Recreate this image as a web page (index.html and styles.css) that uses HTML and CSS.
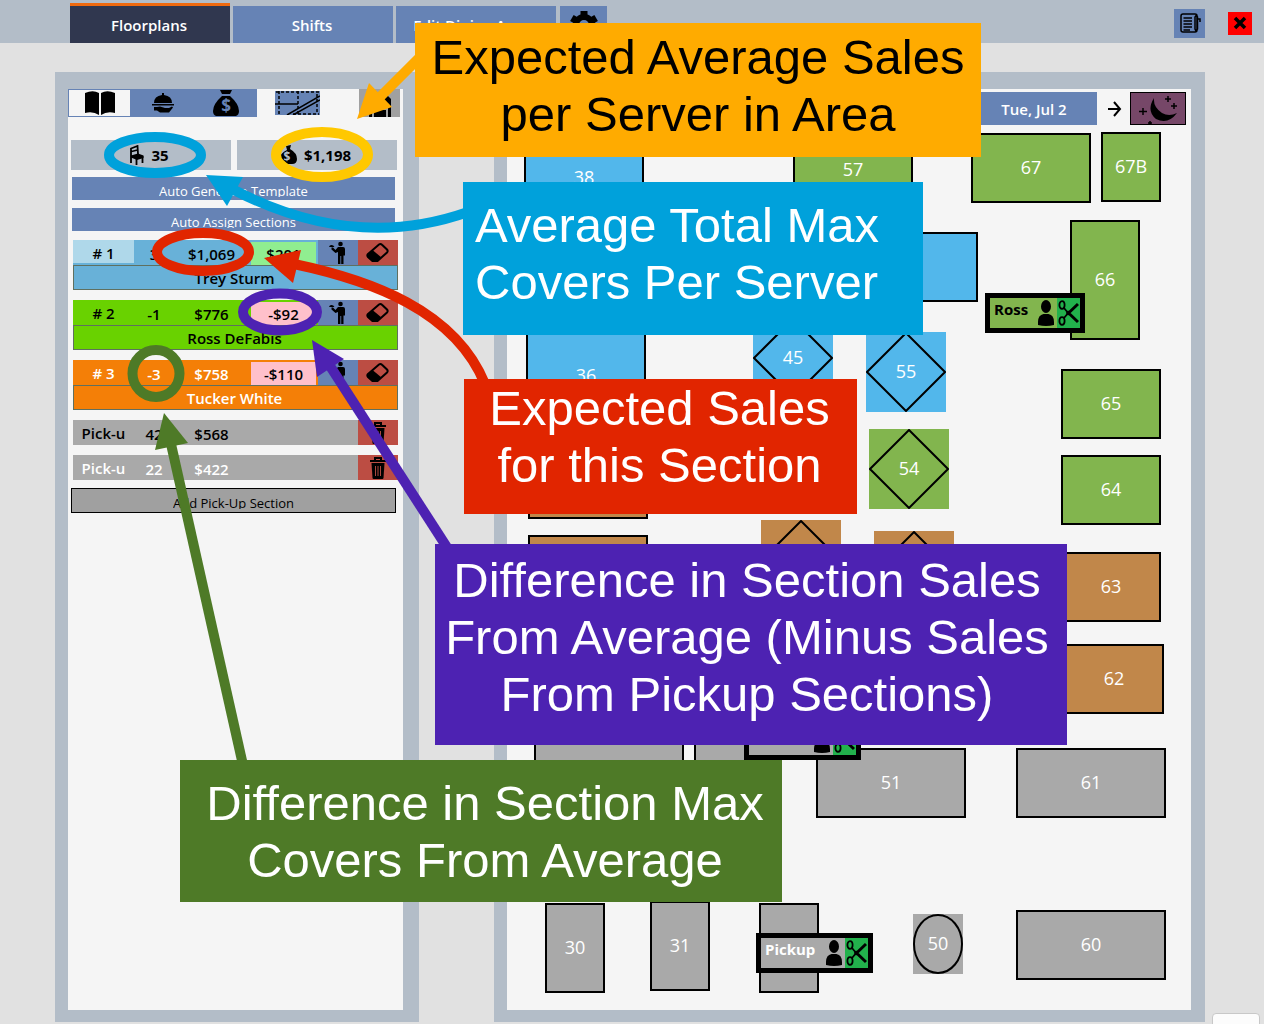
FILE: index.html
```html
<!DOCTYPE html>
<html lang="en">
<head>
<meta charset="utf-8">
<title>Floorplans</title>
<link rel="stylesheet" href="styles.css">
</head>
<body>
<svg class="defs" aria-hidden="true">
  <symbol id="waiter" viewBox="0 0 18 24"><circle cx="11.500" cy="3" r="2.300"/><path d="M9 6h5q2 0 2 2v6.500h-1.500V23h-2.300v-8h-.800v8H9V11L6.500 12 2.500 8.500V6.500h1.500L6.500 9zM0 6q.5-2 2.500-2t3 2z"/></symbol>
  <symbol id="eraser" viewBox="0 0 24 22"><path d="M2 12L13 2.500q1.500-1.200 3 .3l5 4.700q1.300 1.500 0 3L11.500 19H6.500L2 15q-1.300-1.500 0-3z" fill="none" stroke="#000" stroke-width="2"/><path d="M2 12.500L6.500 8 15.500 15.500 11.500 20H6.500L2 15.500z"/></symbol>
  <symbol id="trash" viewBox="0 0 18 22"><path d="M6 3V1h6v2M1 4h16" fill="none" stroke="#000" stroke-width="2"/><path d="M2.500 6h13L14.500 21q-.2 1-1 1h-9q-.8 0-1-1z"/><path d="M6.500 9v10M9 9v10M11.500 9v10" stroke="#a9483f"/></symbol>
  <symbol id="person" viewBox="0 0 16 26"><ellipse cx="8" cy="6.500" rx="5" ry="6.500"/><path d="M0 25v-3q0-7 5.500-8h5q5.500 1 5.500 8v3q-8 2-16 0z"/></symbol>
  <symbol id="scissors" viewBox="0 0 21 26"><g fill="none" stroke="#000" stroke-width="1.800"><ellipse cx="4" cy="5" rx="2.600" ry="3.800"/><ellipse cx="4" cy="21" rx="2.600" ry="3.800"/><path d="M6 8l5 6M6 18l5-6"/><path d="M9 14.500L20 4M9 11.500L20 22" stroke-width="3"/></g></symbol>
</svg>
<div class="page">
  <header class="topbar">
    <nav class="tabs">
      <button class="tab active">Floorplans</button>
      <button class="tab">Shifts</button>
      <button class="tab">Edit Dining Areas</button>
      <button class="tab gear" aria-label="Settings"><svg width="30" height="30" viewBox="0 0 30 30"><path d="M11.500 1h7v5h-7zM11.500 24h7v5h-7z"/><path d="M11.500 1h7v5h-7z" transform="rotate(60 15 15)"/><path d="M11.500 1h7v5h-7z" transform="rotate(120 15 15)"/><path d="M11.500 1h7v5h-7z" transform="rotate(240 15 15)"/><path d="M11.500 1h7v5h-7z" transform="rotate(300 15 15)"/><circle cx="15" cy="15" r="8" fill="none" stroke="#000" stroke-width="6"/></svg></button>
    </nav>
    <div class="window-buttons">
      <button class="notes" aria-label="Notes"><svg width="22" height="22" viewBox="0 0 22 22" fill="none" stroke="#000" stroke-width="1.500"><path d="M16 2H4Q2 2 2 4v14q0 2 2 2h12q2 0 2-2V4q0-2-2-2M16 5v12l1 2 1.500-2V5l-1-2zM19 7h2v3M4.500 6H13M4.500 9H13M4.500 12H13M4.500 15H13M4.500 18H11"/></svg></button>
      <button class="close" aria-label="Close"><svg width="14" height="14" viewBox="0 0 14 14"><path d="M2 2l10 10M12 2L2 12" stroke="#000" stroke-width="3.500"/></svg></button>
    </div>
  </header>
  <main class="workspace">
    <aside class="sidebar">
      <div class="modes">
        <button class="mode current" aria-label="Book"><svg width="32" height="26" viewBox="0 0 32 26"><path d="M1 3Q9-.500 15 3V25Q9 21 1 23zM31 3Q23-.500 17 3V25Q23 21 31 23z"/></svg></button>
        <button class="mode" aria-label="Service"><svg width="24" height="22" viewBox="0 0 24 22"><path d="M3 11q0-7 8-8V1h2v2q8 1 8 8zM1 12h22v1.500H1zM3 15h3l3-.5 5 1.500h4l3-1.500 1 1-4 5H9l-3-2H3z"/></svg></button>
        <button class="mode" aria-label="Sales"><svg width="30" height="26" viewBox="0 0 30 26"><path d="M9 0h12l-2 4h-8zM11 6h8q9 8 9 15 0 4-3 5H5q-3-1-3-5 0-7 9-15z"/><text x="15" y="22" class="coin">$</text></svg></button>
        <button class="grid" aria-label="Grid lines"><svg width="45" height="24" viewBox="0 0 45 24" fill="none" stroke="#000" stroke-width="1.500"><path d="M1 1h43M4 0v24M23 0v24M42 3v20M18 23h26" stroke-dasharray="3 2"/><path d="M0 13h23M12 24L45 5M18 24L45 9"/></svg></button>
        <button class="save" aria-label="Save"><svg width="22" height="22" viewBox="0 0 22 22"><path d="M0 22V4l4-4h14l4 4v18h-3v-9H3v9zM5 15h12v7H5z"/></svg></button>
      </div>
      <div class="stats">
        <div class="stat"><svg width="14" height="20" viewBox="0 0 14 20"><path d="M1 18V3.500L7.500 1l.5 8M1.500 6.500L7.500 5M6.500 13v7M12.500 11v7" fill="none" stroke="#000" stroke-width="1.800"/><path d="M1 10.500l7-2 5.500 2V13L7 15l-6-2.500z"/></svg>35</div>
        <div class="stat"><svg width="17" height="20" viewBox="0 0 17 20"><path d="M6 1l5-1-1 4Q17 8 17 14q0 5-5 5H5q-5 0-5-5.500T7 5z"/><text x="7" y="16" class="coin small">$</text></svg>$1,198</div>
      </div>
      <button class="action"><span>Auto Generate Template</span></button>
      <button class="action"><span>Auto Assign Sections</span></button>
      <div class="sections">
        <section class="card sky">
          <div class="cells"><span class="num"># 1</span><span>3</span><span>$1,069</span><span class="diff up">$201</span><button class="assign" aria-label="Assign server"><svg width="18" height="24"><use href="#waiter"/></svg></button><button class="erase" aria-label="Clear"><svg width="24" height="22"><use href="#eraser"/></svg></button></div>
          <div class="name">Trey Sturm</div>
        </section>
        <section class="card lime">
          <div class="cells"><span class="num"># 2</span><span>-1</span><span>$776</span><span class="diff">-$92</span><button class="assign" aria-label="Assign server"><svg width="18" height="24"><use href="#waiter"/></svg></button><button class="erase" aria-label="Clear"><svg width="24" height="22"><use href="#eraser"/></svg></button></div>
          <div class="name">Ross DeFabis</div>
        </section>
        <section class="card tangerine">
          <div class="cells"><span class="num"># 3</span><span>-3</span><span>$758</span><span class="diff">-$110</span><button class="assign" aria-label="Assign server"><svg width="18" height="24"><use href="#waiter"/></svg></button><button class="erase" aria-label="Clear"><svg width="24" height="22"><use href="#eraser"/></svg></button></div>
          <div class="name">Tucker White</div>
        </section>
        <section class="card pickup dark">
          <div class="cells"><span class="num">Pick-u</span><span>42</span><span>$568</span><button class="erase" aria-label="Delete"><svg width="18" height="22"><use href="#trash"/></svg></button></div>
        </section>
        <section class="card pickup">
          <div class="cells"><span class="num">Pick-u</span><span>22</span><span>$422</span><button class="erase" aria-label="Delete"><svg width="18" height="22"><use href="#trash"/></svg></button></div>
        </section>
      </div>
      <button class="action add"><span>Add Pick-Up Section</span></button>
    </aside>
    <div class="floor">
      <div class="daybar">
        <button class="date">Tue, Jul 2</button>
        <button class="next" aria-label="Next day"><svg width="15" height="16" viewBox="0 0 15 16" fill="none" stroke="#000" stroke-width="2"><path d="M1 8h12M7 1l6 7-6 7"/></svg></button>
        <button class="night" aria-label="Dinner shift"><svg width="50" height="30" viewBox="0 0 50 30"><path d="M21 4Q13 17 23 25 35 31 44 19 36 23 29 19 20 13 21 4z"/><path d="M35 2v6M32 5h6M41 9v6M38 12h6M10 14v7M6 17.500h8M17 27v3M15 29h4" stroke="#000" stroke-width="1.500"/></svg></button>
      </div>
      <div class="plan">
        <div class="table blue t38">38</div>
        <div class="table green t57">57</div>
        <div class="table green t67">67</div>
        <div class="table green t67b">67B</div>
        <div class="table blue t56"></div>
        <div class="table green t66">66</div>
        <div class="table blue t36">36</div>
        <div class="table diamond blue t45"><svg viewBox="0 0 80 80"><path d="M40 1L79 40 40 79 1 40z"/></svg>45</div>
        <div class="table diamond blue t55"><svg viewBox="0 0 80 80"><path d="M40 1L79 40 40 79 1 40z"/></svg>55</div>
        <div class="table diamond green t54"><svg viewBox="0 0 80 80"><path d="M40 1L79 40 40 79 1 40z"/></svg>54</div>
        <div class="table green t65">65</div>
        <div class="table green t64">64</div>
        <div class="table brown t35"></div>
        <div class="table brown t34"></div>
        <div class="table diamond brown t43"><svg viewBox="0 0 80 80"><path d="M40 1L79 40 40 79 1 40z"/></svg></div>
        <div class="table diamond brown t53"><svg viewBox="0 0 80 80"><path d="M40 1L79 40 40 79 1 40z"/></svg></div>
        <div class="table brown t63">63</div>
        <div class="table brown t62">62</div>
        <div class="table gray t33"></div>
        <div class="table gray t41"></div>
        <div class="table gray t51">51</div>
        <div class="table gray t61">61</div>
        <div class="table gray t30">30</div>
        <div class="table gray t31">31</div>
        <div class="table gray t32"></div>
        <div class="table diamond gray t50"><svg viewBox="0 0 50 60"><ellipse cx="25" cy="30" rx="24" ry="29"/></svg>50</div>
        <div class="table gray t60">60</div>
        <div class="tag ross"><b>Ross</b><svg width="16" height="26"><use href="#person"/></svg><button aria-label="Cut Ross"><svg width="21" height="26"><use href="#scissors"/></svg></button></div>
        <div class="tag upper"><b>Pickup</b><svg width="16" height="26"><use href="#person"/></svg><button aria-label="Cut pickup"><svg width="21" height="26"><use href="#scissors"/></svg></button></div>
        <div class="tag lower"><b>Pickup</b><svg width="16" height="26"><use href="#person"/></svg><button aria-label="Cut pickup"><svg width="21" height="26"><use href="#scissors"/></svg></button></div>
      </div>
    </div>
  </main>
  <div class="chat"></div>
  <svg class="marks" aria-hidden="true">
    <g fill="none" stroke-width="10">
      <ellipse cx="155" cy="155" rx="46" ry="18" stroke="#00a1db"/>
      <ellipse cx="322" cy="154.500" rx="46" ry="22.500" stroke="#ffc800"/>
      <ellipse cx="203" cy="252" rx="46" ry="19" stroke="#e12500"/>
      <ellipse cx="280" cy="312" rx="37" ry="18.500" stroke="#4d22b2"/>
      <circle cx="156" cy="373.500" r="23.500" stroke="#4e7a27"/>
      <path d="M380 97L420 57" stroke="#ffab00"/>
      <path d="M234 190C300 224 380 243 468 212" stroke="#00a1db"/>
      <path d="M294 264C370 280 455 310 485 384" stroke="#e12500"/>
      <path d="M330 366L450 552" stroke="#4d22b2"/>
      <path d="M171 444L243 765" stroke="#4e7a27"/>
    </g>
    <path d="M357 119L369 83 392 107z" fill="#ffab00"/>
    <path d="M206 175L243 177 227 206z" fill="#00a1db"/>
    <path d="M264 258L301 250 293 283z" fill="#e12500"/>
    <path d="M312 340L344 359 317 377z" fill="#4d22b2"/>
    <path d="M164 413L188 443 155 450z" fill="#4e7a27"/>
  </svg>
  <div class="callout sales-avg">Expected Average Sales<br>per Server in Area</div>
  <div class="callout covers-avg">Average Total Max<br>Covers Per Server</div>
  <div class="callout sales-section">Expected Sales<br>for this Section</div>
  <div class="callout sales-diff">Difference in Section Sales<br>From Average (Minus Sales<br>From Pickup Sections)</div>
  <div class="callout covers-diff">Difference in Section Max<br>Covers From Average</div>
</div>
</body>
</html>
```
FILE: styles.css
```css
* { box-sizing: border-box; }
body {
  margin: 0;
  background: #e1e1e1;
  color: #000;
  font: 15px/20px "Open Sans", "Noto Sans", sans-serif;
}
button {
  margin: 0;
  padding: 0;
  border: 0;
  background: #6683b5;
  color: #fff;
  font: inherit;
  display: flex;
  align-items: center;
  justify-content: center;
}
svg { display: block; flex: none; }
.defs { position: absolute; width: 0; height: 0; }
.page {
  position: relative;
  min-height: 100vh;
  display: flex;
  flex-direction: column;
  overflow: hidden;
}

/* Top bar */
.topbar {
  display: flex;
  justify-content: space-between;
  height: 43px;
  padding: 3px 12px 0 70px;
  background: #b3bdc8;
}
.tabs { display: flex; gap: 3px; }
.tab {
  width: 160px;
  margin-top: 3px;
  padding-right: 2px;
  font-weight: 600;
}
.tab.active {
  margin-top: 0;
  border-top: 3px solid #f06a0f;
  background: #30374f;
}
.tab.gear { width: 47px; margin-left: 1px; padding: 0; }
.window-buttons { display: flex; align-items: center; gap: 23px; }
.notes { width: 31px; height: 29px; }
.close { width: 24px; height: 23px; background: #f00; }

/* Panels */
.workspace {
  flex: 1;
  display: flex;
  justify-content: space-between;
  gap: 75px;
  padding: 29px 59px 2px 55px;
}
.sidebar, .floor {
  background: #f5f5f5;
  border: solid #b3bdc8;
}
.sidebar { width: 364px; flex: none; border-width: 17px 16px 12px 13px; }
.floor {
  flex: 1;
  border-width: 17px 14px 12px 13px;
  position: relative;
}

/* Sidebar */
.modes { display: flex; height: 28px; overflow: hidden; }
.mode { width: 63px; }
.mode.current { background: #f5f5f5; border: 1px solid #6683b5; }
.grid { width: 45px; height: 24px; margin: 2px 39px 0 18px; }
.save { width: 41px; background: #a0a0a0; align-items: flex-end; }
.coin {
  font: bold 17px "Open Sans", sans-serif;
  text-anchor: middle;
  fill: #6683b5;
}
.coin.small { font-size: 12px; fill: #b3bdc8; }
.stats { display: flex; gap: 6px; padding: 23px 6px 7px 3px; }
.stat {
  flex: 1;
  height: 30px;
  display: flex;
  align-items: center;
  justify-content: center;
  gap: 7px;
  padding-right: 3px;
  background: #b3bdc8;
  font-weight: 700;
}
.action {
  width: 323px;
  height: 23px;
  margin: 0 0 8px 4px;
  font-size: 13px;
  align-items: flex-start;
}
.action span { height: 20px; padding-top: 4px; overflow: hidden; }
.sections {
  display: grid;
  gap: 10px;
  padding: 1px 5px 8px 5px;
  font-size: 15px;
  font-weight: 600;
}
.cells {
  display: grid;
  grid-template-columns: 61px 40px 77px 65px 42px 40px;
  height: 25px;
  text-align: center;
  line-height: 28px;
}
.cells > * { overflow: hidden; }
.cells .num { line-height: 26px; }
.cells > :nth-child(3) { padding-right: 2px; }
.diff { margin-top: 2px; background: #ffc0cb; color: #000; line-height: 24px; }
.diff.up { background: #90ee90; }
.assign { margin-left: 2px; }
.erase { background: #bc4d43; grid-column: 6; }
.name {
  height: 25px;
  padding-right: 2px;
  border: 1px solid #5f7060;
  text-align: center;
  line-height: 24px;
}
.sky { background: #68b1d8; }
.sky .num { background: #afd8ea; margin-bottom: 2px; }
.lime { background: #69d200; }
.tangerine { background: #f47f07; color: #fff; }
.pickup { background: #a9a9a9; color: #fff; }
.pickup.dark { color: #000; }
.action.add {
  width: 325px;
  height: 25px;
  margin-left: 3px;
  border: 1px solid #000;
  background: #a0a0a0;
  color: #000;
}

/* Floor plan */
.daybar { display: flex; justify-content: flex-end; padding: 3px 5px 0; }
.date { width: 126px; height: 33px; font-weight: 600; }
.next { width: 33px; height: 33px; padding-left: 2px; background: none; }
.night { width: 56px; height: 33px; background: #764768; border: 1px solid #000; }
.plan { position: absolute; inset: 0; pointer-events: none; }
.table {
  position: absolute;
  width: 120px;
  height: 70px;
  display: flex;
  align-items: center;
  justify-content: center;
  padding-bottom: 2px;
  border: 2px solid #000;
  color: #fff;
  font-size: 18px;
}
.blue { background: #52b7eb; }
.green { background: #82b54e; }
.brown { background: #c1874a; }
.gray { background: #a9a9a9; }
.diamond { width: 80px; height: 80px; border: 0; }
.diamond svg {
  position: absolute;
  inset: 0;
  fill: none;
  stroke: #000;
  stroke-width: 2;
}
.t38 { left: 17px; top: 54px; }
.t57 { left: 286px; top: 46px; }
.t67 { left: 464px; top: 44px; }
.t67b { left: 594px; top: 43px; width: 60px; }
.t56 { left: 351px; top: 143px; }
.t66 { left: 563px; top: 131px; width: 70px; height: 120px; }
.t36 { left: 19px; top: 227px; height: 120px; }
.t45 { left: 246px; top: 229px; }
.t55 { left: 359px; top: 243px; }
.t54 { left: 362px; top: 340px; }
.t65 { left: 554px; top: 280px; width: 100px; }
.t64 { left: 554px; top: 366px; width: 100px; }
.t35 { left: 21px; top: 360px; }
.t34 { left: 21px; top: 446px; }
.t43 { left: 254px; top: 431px; }
.t53 { left: 367px; top: 442px; }
.t63 { left: 554px; top: 463px; width: 100px; }
.t62 { left: 557px; top: 555px; width: 100px; }
.t33 { left: 27px; top: 611px; width: 150px; }
.t41 { left: 187px; top: 611px; width: 60px; }
.t51 { left: 309px; top: 659px; width: 150px; }
.t61 { left: 509px; top: 659px; width: 150px; }
.t30 { left: 38px; top: 814px; width: 60px; height: 90px; }
.t31 { left: 143px; top: 812px; width: 60px; height: 90px; }
.t32 { left: 252px; top: 814px; width: 60px; height: 90px; }
.t50 { left: 406px; top: 825px; width: 50px; height: 60px; }
.t60 { left: 509px; top: 821px; width: 150px; }
.tag {
  position: absolute;
  display: flex;
  align-items: center;
  width: 117px;
  height: 40px;
  border: 5px solid #000;
  background: #a9a9a9;
  color: #fff;
  font-size: 15px;
}
.tag b { flex: 1; padding: 0 0 8px 4px; }
.tag button { width: 23px; height: 30px; margin-left: 3px; background: #22b14c; }
.tag.ross { left: 478px; top: 204px; width: 100px; background: #82b54e; color: #000; }
.tag.upper { left: 237px; top: 631px; }
.tag.lower { left: 249px; top: 844px; }

.chat {
  position: absolute;
  right: 4px;
  bottom: -4px;
  width: 48px;
  height: 15px;
  border: 1px solid #c8c8c8;
  border-radius: 4px;
  background: #fcfcfc;
}

/* Annotations over the screen */
.marks { position: absolute; left: 0; top: 0; width: 100%; height: 100%; pointer-events: none; }
.callout {
  position: absolute;
  color: #fff;
  font: 49px/57px "Liberation Sans", Arial, sans-serif;
  text-align: center;
  white-space: nowrap;
}
.sales-avg { left: 415px; top: 23px; width: 566px; height: 134px; padding: 6px 0 0; background: #ffab00; color: #000; }
.covers-avg { left: 463px; top: 182px; width: 460px; height: 153px; padding: 15px 0 0 12px; background: #00a1db; text-align: left; }
.sales-section { left: 464px; top: 379px; width: 393px; height: 135px; padding: 1px 2px 0 0; background: #e12500; }
.sales-diff { left: 435px; top: 544px; width: 632px; height: 201px; padding: 8px 8px 0 0; background: #4d22b2; }
.covers-diff { left: 180px; top: 760px; width: 602px; height: 142px; padding: 15px 0 0 8px; background: #4e7a27; }
```
